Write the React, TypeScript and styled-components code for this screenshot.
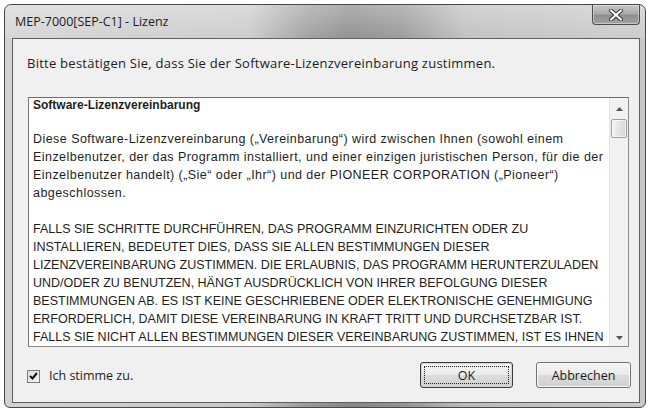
import styled, { createGlobalStyle } from 'styled-components';

const GlobalStyle = createGlobalStyle`
  html, body {
    margin: 0;
    padding: 0;
    background: #fff;
  }
  body {
    width: 650px;
    height: 412px;
    overflow: hidden;
  }
`;

const Window = styled.div`
  box-sizing: border-box;
  margin: 4px 0 0 4px;
  width: 642px;
  height: 404px;
  border: 1px solid #474747;
  border-radius: 7px 7px 6px 6px;
  background: linear-gradient(90deg, #d2d2d2 0%, #c8c8c8 38%, #9a9a9a 47%, #858585 54%, #929292 62%, #bcbcbc 72%, #c8c8c8 100%);
  display: flex;
  flex-direction: column;
  padding: 0 5px 4px 7px;
  font-family: "Open Sans", sans-serif;
`;

const TitleBar = styled.div`
  height: 33px;
  margin: 0 -5px 0 -7px;
  padding: 0 5px 0 7px;
  border-radius: 6px 6px 0 0;
  background: linear-gradient(180deg, rgba(255, 255, 255, 0.35) 0%, rgba(255, 255, 255, 0.1) 100%);
  display: flex;
  align-items: flex-start;
  justify-content: space-between;
`;

const Title = styled.span`
  margin: 9px 0 0 3px;
  font-size: 12.5px;
  line-height: 16px;
  color: #1c1c1c;
`;

const CloseButton = styled.div`
  box-sizing: border-box;
  width: 48px;
  height: 20px;
  border: 1px solid #4c4c4c;
  border-top: none;
  border-radius: 0 0 4px 4px;
  background: linear-gradient(180deg, #c6c6c6 0%, #acacac 45%, #8e8e8e 55%, #a4a4a4 100%);
  box-shadow: inset 0 0 0 1px rgba(255, 255, 255, 0.4);
  display: flex;
  align-items: center;
  justify-content: center;
`;

const Client = styled.div`
  box-sizing: border-box;
  height: 365px;
  border: 1px solid #606060;
  background: #f0f0f0;
  display: flex;
  flex-direction: column;
  padding: 14px 10px 14px 14px;
`;

const Instruction = styled.div`
  height: 20px;
  line-height: 20px;
  font-size: 13px;
  letter-spacing: 0.25px;
  color: #1c1c1c;
  white-space: nowrap;
`;

const LicenseBox = styled.div`
  box-sizing: border-box;
  margin: 24px 0 0 1px;
  height: 250px;
  display: flex;
  border: 1px solid #8a8a8a;
  border-top-color: #6f6f6f;
  border-left-color: #7a7a7a;
  background: #fff;
`;

const LicenseText = styled.div`
  flex: 1;
  padding: 0 0 0 4px;
  font-family: "Liberation Sans", Arial, sans-serif;
  font-size: 12.5px;
  line-height: 18px;
  color: #1e1e1e;
  white-space: nowrap;
  overflow: hidden;
`;

const Heading = styled.div`
  font-weight: bold;
  font-size: 12px;
  line-height: 14px;
`;

const Paragraph = styled.p<{ $spacing?: number }>`
  margin: 18px 0 0;
  letter-spacing: ${(p) => p.$spacing ?? 0}px;
`;

const ScrollBar = styled.div`
  width: 18px;
  display: flex;
  flex-direction: column;
  align-items: center;
  background: #f2f2f2;
  border-left: 1px solid #e2e2e2;
`;

const ArrowButton = styled.div<{ $down?: boolean }>`
  height: ${(p) => (p.$down ? 16 : 21)}px;
  width: 100%;
  display: flex;
  align-items: center;
  justify-content: center;
  svg {
    transform: ${(p) => (p.$down ? 'rotate(180deg)' : 'none')};
  }
`;

const Thumb = styled.div`
  box-sizing: border-box;
  width: 16px;
  height: 19px;
  border: 1px solid #9c9c9c;
  border-radius: 2px;
  background: linear-gradient(90deg, #f3f3f3 0%, #e4e4e4 50%, #d6d6d6 100%);
  box-shadow: inset 0 0 0 1px rgba(255, 255, 255, 0.7);
`;

const Track = styled.div`
  flex: 1;
`;

const Footer = styled.div`
  margin-top: 15px;
  height: 26px;
  display: flex;
  align-items: center;
`;

const CheckBox = styled.div`
  box-sizing: border-box;
  margin: 2px 0 0 0;
  width: 13px;
  height: 13px;
  border: 1px solid #7a7a7a;
  background: linear-gradient(135deg, #dcdcdc, #fafafa);
  display: flex;
  align-items: center;
  justify-content: center;
`;

const CheckLabel = styled.span`
  margin: 1px 0 0 9px;
  font-size: 12.5px;
  color: #1c1c1c;
`;

const Spacer = styled.div`
  flex: 1;
`;

const Button = styled.div<{ $default?: boolean }>`
  box-sizing: border-box;
  position: relative;
  width: ${(p) => (p.$default ? 93 : 95)}px;
  height: 26px;
  margin-left: ${(p) => (p.$default ? 0 : 23)}px;
  margin-right: ${(p) => (p.$default ? 0 : -2)}px;
  border: 1px solid ${(p) => (p.$default ? '#3a3a3a' : '#707070')};
  border-radius: 3px;
  background: linear-gradient(180deg, #f4f4f4 0%, #ebebeb 48%, #dcdcdc 52%, #d0d0d0 100%);
  box-shadow: inset 0 0 0 1px ${(p) => (p.$default ? '#d4d4d4' : '#fbfbfb')};
  display: flex;
  align-items: center;
  justify-content: center;
  font-size: 12.5px;
  color: #1c1c1c;
`;

const FocusRing = styled.div`
  position: absolute;
  inset: 3px;
  border: 1px dotted #222;
`;

const Triangle = () => (
  <svg width="7" height="4" viewBox="0 0 7 4">
    <path d="M0 4 L3.5 0 L7 4 Z" fill="#555" />
  </svg>
);

export default function App() {
  return (
    <>
      <GlobalStyle />
      <Window>
        <TitleBar>
          <Title>MEP-7000[SEP-C1] - Lizenz</Title>
          <CloseButton>
            <svg width="14" height="12" viewBox="0 0 14 12">
              <path d="M2 1.5 L12 10.5 M12 1.5 L2 10.5" stroke="#3a3a3a" strokeWidth="4.2" strokeLinecap="round" />
              <path d="M2 1.5 L12 10.5 M12 1.5 L2 10.5" stroke="#fff" strokeWidth="2.2" strokeLinecap="round" />
            </svg>
          </CloseButton>
        </TitleBar>
        <Client>
          <Instruction>Bitte bestätigen Sie, dass Sie der Software-Lizenzvereinbarung zustimmen.</Instruction>
          <LicenseBox>
            <LicenseText>
              <Heading>Software-Lizenzvereinbarung</Heading>
              <Paragraph $spacing={0.45}>
                Diese Software-Lizenzvereinbarung („Vereinbarung“) wird zwischen Ihnen (sowohl einem<br />
                Einzelbenutzer, der das Programm installiert, und einer einzigen juristischen Person, für die der<br />
                Einzelbenutzer handelt) („Sie“ oder „Ihr“) und der PIONEER CORPORATION („Pioneer“)<br />
                abgeschlossen.
              </Paragraph>
              <Paragraph>
                FALLS SIE SCHRITTE DURCHFÜHREN, DAS PROGRAMM EINZURICHTEN ODER ZU<br />
                INSTALLIEREN, BEDEUTET DIES, DASS SIE ALLEN BESTIMMUNGEN DIESER<br />
                LIZENZVEREINBARUNG ZUSTIMMEN. DIE ERLAUBNIS, DAS PROGRAMM HERUNTERZULADEN<br />
                UND/ODER ZU BENUTZEN, HÄNGT AUSDRÜCKLICH VON IHRER BEFOLGUNG DIESER<br />
                BESTIMMUNGEN AB. ES IST KEINE GESCHRIEBENE ODER ELEKTRONISCHE GENEHMIGUNG<br />
                ERFORDERLICH, DAMIT DIESE VEREINBARUNG IN KRAFT TRITT UND DURCHSETZBAR IST.<br />
                FALLS SIE NICHT ALLEN BESTIMMUNGEN DIESER VEREINBARUNG ZUSTIMMEN, IST ES IHNEN
              </Paragraph>
            </LicenseText>
            <ScrollBar>
              <ArrowButton><Triangle /></ArrowButton>
              <Thumb />
              <Track />
              <ArrowButton $down><Triangle /></ArrowButton>
            </ScrollBar>
          </LicenseBox>
          <Footer>
            <CheckBox>
              <svg width="9" height="8" viewBox="0 0 9 8">
                <path d="M1 4 L3.5 6.5 L8 1" stroke="#111" strokeWidth="2" fill="none" />
              </svg>
            </CheckBox>
            <CheckLabel>Ich stimme zu.</CheckLabel>
            <Spacer />
            <Button $default>
              <FocusRing />
              OK
            </Button>
            <Button>Abbrechen</Button>
          </Footer>
        </Client>
      </Window>
    </>
  );
}
